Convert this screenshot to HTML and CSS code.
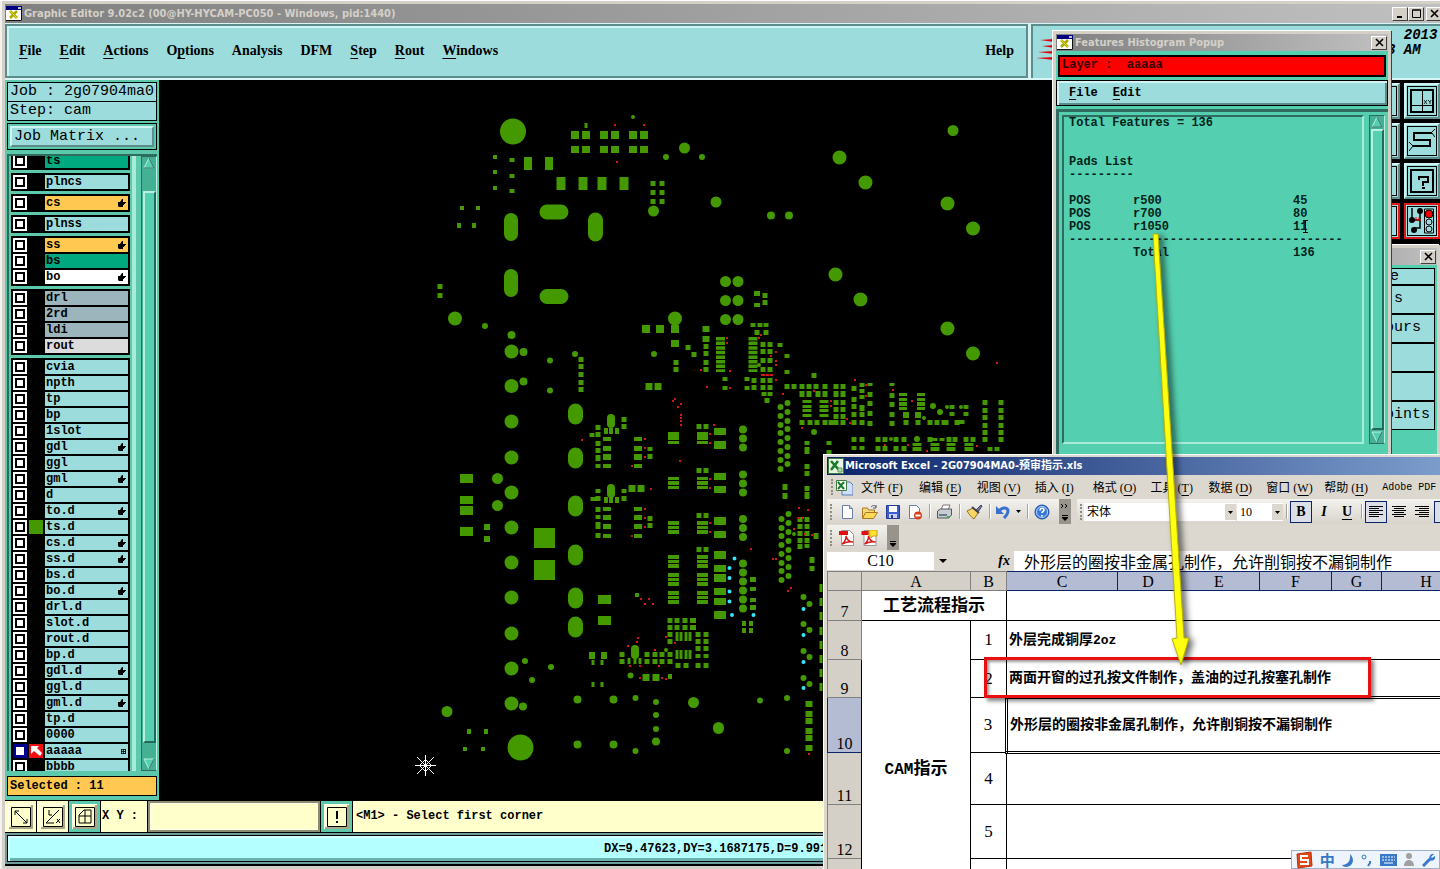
FILE: index.html
```html
<!DOCTYPE html>
<html lang="zh-CN">

<head>
  <meta charset="UTF-8">
  <meta name="viewport" content="width=device-width, initial-scale=1" />
  <title>Graphic Editor 9.02c2</title>
  <link rel="stylesheet" href="styles.css">
</head>

<body>

  <!-- shared icons -->
  <svg width="0" height="0" class="defs">
    <symbol id="i-app" viewBox="0 0 16 15">
      <path fill="#fff" d="M0 0h16v15H0z"/><path fill="#000080" d="M0 0h16v4H0z"/><path fill="#c0c0c0" d="M12 1h3v2h-3z"/>
      <path d="M0 14.500h15.500V4" fill="none" stroke="#111"/>
      <path d="M4 5l7 7M11 5l-7 7" stroke="#a8a800" stroke-width="2.500"/><path d="M4 5l7 7" stroke="#e8e000"/>
    </symbol>
    <symbol id="i-hand" viewBox="0 0 8 8"><path d="M0 3h2l2-3h1v3h3v1H7v1H6v1H5v2H1L0 7z"/></symbol>
    <symbol id="i-xls" viewBox="0 0 16 16">
      <path fill="#e9f5e4" stroke="#3c7d3c" d="M.5.5h15v15H.5z"/><path d="M3 3l8 9M10 3L3 12" stroke="#1b7a2b" stroke-width="2.600"/><path d="M10 10h4v4h-4z" fill="#b9d9a9" stroke="#5a9a5a"/>
    </symbol>
    <symbol id="i-pdf" viewBox="0 0 16 16">
      <path d="M2.500.5h8l4 4v11h-12z" fill="#fff" stroke="#999"/><path d="M0 1h9v4H0z" fill="#e01010"/>
      <path d="M3 14c3-2 4-5 4-8 1 4 3 6 7 6-4-1-7 0-11 2z" fill="none" stroke="#d81818" stroke-width="1.400"/>
    </symbol>
  </svg>

  <div class="editor">
    <header class="title-bar">
      <svg width="16" height="15"><use href="#i-app"/></svg>
      <h1>Graphic Editor 9.02c2 (00@HY-HYCAM-PC050 - Windows, pid:1440)</h1>
      <div class="win-btns">
        <button aria-label="Minimize"><svg width="9" height="9"><path d="M1 8h5" stroke="#000" stroke-width="2"/></svg></button>
        <button aria-label="Maximize"><svg width="9" height="9"><path d="M.5 1h8v7.500h-8zM0 1h9" fill="none" stroke="#000"/></svg></button>
        <button aria-label="Close"><svg width="9" height="9"><path d="M1 1l7 7M8 1l-7 7" stroke="#000" stroke-width="1.600"/></svg></button>
      </div>
    </header>

    <div class="menu-row">
      <nav class="menu-bar">
        <button><u>F</u>ile</button>
        <button><u>E</u>dit</button>
        <button><u>A</u>ctions</button>
        <button>O<u>p</u>tions</button>
        <button>Analysis</button>
        <button>DFM</button>
        <button><u>S</u>tep</button>
        <button><u>R</u>out</button>
        <button><u>W</u>indows</button>
        <button class="help">Help</button>
      </nav>
      <div class="brand">
        <svg width="18" height="24"><path d="M18 1v3L4 2zM18 7v3L6 8zM18 13v3L2 14zM18 19v3L0 20z" fill="#e00010"/></svg>
        <pre>  2013
3 AM</pre>
      </div>
    </div>

    <div class="workspace">
      <aside class="sidebar">
        <div class="job">Job : 2g07904ma0</div>
        <div class="job">Step: cam</div>
        <div class="matrix"><button>Job Matrix ...</button></div>
        <div class="layers">
          <div class="layer-list" id="layers"></div>
          <div class="rail"></div>
          <div class="scroll">
            <svg width="14" height="13"><path d="M7 1L2 11h10z" fill="#54d0b0" stroke="#b8f0e0"/><path d="M7 1l5 10H2" fill="none" stroke="#23685a"/></svg>
            <div class="thumb"></div>
            <svg width="14" height="13"><path d="M2 2h10L7 12z" fill="#54d0b0" stroke="#b8f0e0"/><path d="M12 2L7 12" stroke="#23685a"/></svg>
          </div>
        </div>
        <div class="selected">Selected : 11</div>
      </aside>

      <main class="canvas">
        <svg width="1281" height="720" viewBox="159 80 1281 720">
          <!-- rectangular pads, drawn as columns: stroke width = pad width -->
          <g class="pads">
            <path stroke-width="8" d="M575 131v8M586 131v8M604 131v8M615 131v8M633 131v8M644 131v8M575 146v7M586 146v7M604 146v7M615 146v7M633 146v7M644 146v7M528 157v13M549 157v13M646 325v8M660 325v8M675 325v8M675 340v7
              M607 437v4M607 446v5M607 454v6M607 464v4M638 437v4M638 446v5M638 454v6M638 464v4M607 507v4M607 515v5M607 524v5M607 534v4M638 507v4M638 515v5M638 524v5M638 534v4
              M903 393v3M903 398v3M903 402v4M903 407v3M921 393v3M921 398v3M921 402v4M921 407v3"/>
            <path stroke-width="9" d="M561 177v13M583 177v13M602 177v13M624 177v13M807 400v3M807 405v3M807 409v3M807 414v3M824 400v3M824 405v3M824 409v3M824 414v3M917 443v3M917 447v4M935 443v3M935 447v4M951 443v3M951 447v4M969 443v3M969 447v4"/>
            <path stroke-width="9" stroke-dasharray="3.500 1.100" d="M720.500 337v35M753 337v35"/>
            <path stroke-width="13" d="M466.500 474v9M466.500 496v8M466.500 506v9M466.500 527v9M604.500 595v9M604.500 616v9"/>
            <path stroke-width="21" d="M544.500 528v20M544.500 560v20"/>
            <path stroke-width="12" d="M720 428v7M720 441v8M720 473v7M720 486v7M720 517v8M720 531v7M720 551v8M720 565v7M720 574v8M720 588v7M720 598v7M720 611v8"/>
            <path stroke-width="11" d="M673.500 432v8M673.500 441v3M702.500 432v8M702.500 441v3M673.500 477v3M673.500 481v4M673.500 486v3M702.500 477v3M702.500 481v4M702.500 486v3M673.500 521v4M673.500 526v3M673.500 530v4M702.500 521v4M702.500 526v3M702.500 530v4
              M673.500 555v4M673.500 560v3M673.500 564v4M702.500 555v4M702.500 560v3M702.500 564v4M673.500 573v4M673.500 578v3M673.500 582v4M702.500 573v4M702.500 578v3M702.500 582v4M673.500 591v4M673.500 596v3M673.500 600v4M702.500 591v4M702.500 596v3M702.500 600v4"/>
            <path stroke-width="7" d="M632 485v7M641 485v7M649 383v7M658 383v7M706 326v6M706 336v6M646 674v7M656 674v7M809 701v6M809 711v6M809 718v6M809 728v6M809 735v6M809 745v6M945 420v5"/>
            <path stroke-width="6" d="M487 524v6M487 536v6M592 652v7M604 652v7M753 577v5M753 587v4M753 598v4M753 605v5M757 291v5M757 303v4M906 412v6M918 412v6M693 618v5M693 625v5"/>
            <path stroke-width="5" d="M440 284v5M440 293v5M512 158v4M512 174v4M512 189v4M581 357v5M581 364v5M581 372v5M581 380v5M581 387v5M653 181v5M662 181v5M653 190v5M662 190v5M653 199v5M662 199v5
              M688 345v5M694 352v5M676 360v5M676 367v5M706 344v5M706 351v5M706 360v5M706 367v5M725 377v4M725 386v4M747 377v4M747 386v4M754 378v5M754 385v5M765 293v5M765 300v5
              M753 323v4M760 323v4M766 323v4M757 330v5M766 330v5M763 342v5M770 342v5M763 349v5M770 349v5M763 358v5M770 358v5M763 367v5M770 367v5M763 378v5M770 378v5M763 385v5M770 385v5M764 392v4M770 392v4M767 398v5M780 343v4M787 354v4M787 370v4
              M624 417v5M624 424v5M598 425v5M598 432v5M592 433v4M598 441v5M598 448v5M598 455v6M598 464v4M650 447v4M650 454v5M624 489v4M624 496v5M598 489v4M598 496v5M593 497v4M598 507v5M598 515v4M598 522v7M598 533v5M650 516v5M650 523v5
              M699 424v5M706 424v5M699 468v5M706 468v5M699 513v5M706 513v5M699 547v5M706 547v5
              M787 384v5M794 384v5M802 384v5M809 384v5M816 384v5M825 384v5M836 384v5M843 384v5M814 373v5M802 391v6M809 391v6M818 391v6M825 391v6M836 391v6M843 391v6M836 400v5M843 400v5M836 407v5M843 407v5M836 414v5M843 414v5M802 420v5M810 420v5M817 420v5M825 420v5M831 420v5M836 420v5M843 420v5
              M854 386v5M854 397v5M854 404v5M854 412v5M854 420v5M862 383v4M862 389v4M862 395v4M862 405v6M862 412v5M862 420v5M870 383v3M870 392v5M870 401v5M870 411v5M870 421v5M892 383v3M892 393v5M892 402v5M892 412v5M892 421v5M906 420v5M918 420v5M930 420v5M937 420v5M957 420v5M962 420v4
              M952 405v4M952 412v4M966 405v4M966 412v4M985 400v5M985 408v5M985 415v5M985 423v5M985 430v5M985 437v5M1001 400v5M1001 408v5M1001 415v5M1001 423v5M1001 430v5M1001 437v5
              M854 437v5M862 437v5M878 437v5M885 437v5M896 437v5M904 437v5M930 437v5M935 438v3M942 438v3M949 437v5M955 437v5M966 437v5M973 437v5M854 446v4M862 446v4M878 446v5M885 446v5M896 446v5M904 446v5M990 447v4M997 447v4
              M807 441v4M807 447v7M829 441v4M829 450v4M807 464v5M807 471v5M807 486v5M807 492v7M785 484v6M785 493v6M800 517v5M807 517v5M800 524v5M807 524v5M800 531v5M807 531v5M800 538v5M807 538v5M800 544v5M807 544v4M812 557v6M812 566v5M816 533v6
              M670 618v5M677 618v5M685 618v5M670 625v5M677 625v5M685 625v5M670 632v5M670 639v5M698 632v5M706 632v5M698 639v5M706 639v5M698 646v5M706 646v5M698 654v4M706 654v4M698 663v5M706 663v5M678 663v5M686 663v5
              M622 652v5M622 659v5M647 652v5M655 652v5M662 652v5M670 652v5M647 659v5M655 659v5M662 659v5M670 659v5"/>
            <path stroke-width="4" d="M495 155v4M495 170v4M495 186v4M462 206v4M478 206v4M459 223v5M474 223v5M469 729v5M486 729v5M465 747v4M483 747v4M744 621v5M751 621v5M744 628v5M751 628v5M606 428v6M617 428v6M606 497v6M617 497v6M611 428v6M611 497v6M637 593v4M670 674v5"/>
            <path stroke-width="3" d="M586 123v5M677 632v9M681 632v9M686 632v9M690 632v9M677 650v9M681 650v9M686 650v9M690 650v9M593 660v5M602 660v5M593 682v5M602 682v5M629 658v6M635 658v6M640 658v6M821 584v8M821 598v8M821 612v8M821 627v8M821 641v8M821 655v8M821 669v8M821 683v8"/>
          </g>

          <!-- round and oblong pads -->
          <g class="pads round">
            <path stroke-width="26" d="M513 131.500h0M520.500 747.500h0"/>
            <path stroke-width="15" d="M575.500 411v6M575.500 455v6M575.500 503v6M575.500 552v6M575.500 595v6M575.500 624v6M595.500 220v14M547 212h14M547 296.500h14"/>
            <path stroke-width="14" d="M511 220v14M511 276v14M455 318.500h0M675 318.500h0M511.500 351.500h0M511.500 386h0M511.500 421.500h0M511.500 457.500h0M511.500 492.500h0M511.500 527.500h0M511.500 562.500h0M511.500 597.500h0M511.500 633.500h0M511.500 668.500h0M511.500 703.500h0
              M839.500 157.500h0M865.500 182.500h0M947.500 203.500h0M973 228.500h0M835.500 274.500h0M860.500 299.500h0M947.500 328.500h0M973 353.500h0"/>
            <path stroke-width="11" d="M684.500 148h0M653.500 211h0M716 202h0M725.500 281.500h0M738 281.500h0M725.500 300.500h0M738 300.500h0M725.500 319.500h0M738 319.500h0M497.500 478.500h0M497.500 505.500h0M693.500 702.500h0M718.500 727.500v1M953 130.500h0M447 711.500h0"/>
            <path stroke-width="8" d="M635 649v6M611 418v6M611 488v6M743 429.500h0M743 438.500h0M743 447.500h0M743 474.500h0M743 483.500h0M743 492.500h0M743 519h0M743 528h0M743 537h0M743 563.500h0M743 572.500h0M743 581.500h0M743 590.500h0M743 599.500h0M743 608.500h0
              M577.500 699.500h0M613.500 699.500h0M577.500 744.500h0M613.500 744.500h0M771 215.500h0M789 215.500h0M523.500 352h0M523.500 381.500h0M511.500 335h0M523 706.500h0M656 741.500h0"/>
            <path stroke-width="6" d="M485 326h0M575 354h0M550 360.500h0M550 390.500h0M654 354h0M525 661h0M551 667h0M532 680h0M635.500 698h0M656 702h0M656 715h0M656 729h0M635.500 751h0M760 700.500h0M787 698h0M787 751h0M666 157h0M702 157h0M630.500 675.500h0
              M780.500 407h0M780.500 416h0M780.500 425h0M780.500 433h0M780.500 442h0M780.500 451h0M780.500 460h0M780.500 469h0M787.500 403h0M787.500 412h0M787.500 421h0M787.500 429h0M787.500 438h0M787.500 447h0M787.500 456h0M787.500 464h0
              M781.500 519h0M781.500 528h0M781.500 536h0M781.500 545h0M781.500 554h0M781.500 563h0M781.500 571h0M781.500 580h0M788.500 514h0M788.500 523h0M788.500 532h0M788.500 541h0M788.500 550h0M788.500 558h0M788.500 567h0M788.500 576h0
              M814 432h0M933 406h0M940 412h0M803.500 597h0M803.500 624h0M803.500 651h0M803.500 678h0M809.500 604h0M809.500 630h0M809.500 657h0M809.500 684h0M917 439h0"/>
            <path stroke-width="4" d="M633 117h0M666 650h0M924 418h0M947 407h0M961 407h0M891 439h0M794 534h0M759 365h0"/>
          </g>

          <path class="drill" d="M614 125h2M643 125h2M616 162h2M726 338h2M726 343h2M760 335h2M758 338h2M770 356h2M775 352h2M775 361h2M775 365h2M775 380h2M761 375h4M766 375h3M770 375h3M729 371h2M729 388h2M700 370h2M706 387h2M782 394h2M813 391h2M830 401h2M830 406h2M854 380h2M865 385h2M865 396h2M846 419h2M849 423h2M801 428h2M892 390h2M911 401h2M996 363h2M884 445h2M907 445h2M926 451h2M976 446h2M713 425h2M709 434h2M709 443h2M709 479h2M709 488h2M709 523h2M709 532h2M798 508h2M807 510h2M798 518h2M802 518h2M793 529h2M804 534h2M811 535h2M750 549h2
            M581 440h2M644 439h2M644 448h2M644 457h2M631 466h2M650 489h2M644 509h2M644 518h2M644 527h2M631 536h2M672 401h2M674 399h2M680 404h2M677 407h2M680 415h2M680 418h2M680 421h2M680 425h2M679 461h2M640 599h2M648 599h2M644 604h2M652 604h2
            M637 638h2M636 642h2M627 646h2M665 637h2M674 643h2M654 650h2M629 666h2M639 666h2M658 666h2M639 678h2M661 678h2M665 679h2M772 559h2M775 559h2M787 591h2M790 588h2M808 754h2"/>
          <path class="via" d="M734.500 558.500h0M729.500 568h0M729.500 578h0M729.500 591.500h0M729.500 601.500h0M732 615h0M753.500 615h0M803.500 609h0M803.500 635h0M803.500 662h0M803.500 688h0"/>
          <path class="origin" d="M415 765.500h21M425.500 755v21M417 757l17 17M434 757l-17 17M425.500 759.500l6 6-6 6-6-6z"/>
        </svg>
      </main>

      <aside class="tools">
        <button></button>
        <button aria-label="Coordinates"><svg width="24" height="24"><path d="M1 1h22v22H1z" fill="none" stroke="#000" stroke-width="2"/><path d="M12.500 1v22M1 16.500h22" stroke="#000"/><path d="M14 11l3 4M17 11l-3 4M18 11l2 2 1-2M20 13v2" stroke="#000" fill="none" stroke-width=".8"/></svg></button>
        <button></button>
        <button aria-label="Route"><svg width="26" height="24"><path d="M23 4H5v7h16v6H4" fill="none" stroke="#000" stroke-width="2"/><path d="M22 4l4-4M23 4l3 4M4 17l-4-4M4 17l-4 5" fill="none" stroke="#000"/></svg></button>
        <button></button>
        <button aria-label="Query"><svg width="24" height="24"><path d="M1 1h22v22H1z" fill="none" stroke="#000" stroke-width="2"/><path d="M9 11V8h9v5h-5v4M12 19h3" fill="none" stroke="#000" stroke-width="2"/></svg></button>
        <button class="on"></button>
        <button class="on" aria-label="Net check"><svg width="26" height="26"><path d="M3 0v12M11 3v17H5M3 12h8" stroke="#000" stroke-width="1.500" fill="none"/><path d="M5 12h7M7 9v3M10 9v3" stroke="#e00000"/><circle cx="3" cy="12" r="3"/><circle cx="11" cy="3" r="3"/><circle cx="5" cy="22" r="3"/><path d="M15.500 1h9v24h-9z" fill="none" stroke="#000"/><circle cx="20" cy="6" r="4" fill="#f00000" stroke="#000"/><circle cx="20" cy="14" r="3" fill="none" stroke="#000"/><circle cx="20" cy="21" r="3" fill="none" stroke="#000"/></svg></button>
      </aside>
    </div>

    <div class="command">
      <button class="cmd-btn" aria-label="Zoom area"><svg width="20" height="20"><path d="M.5.5h19v19H.5zM4 4l12 12M4 8V4h4M16 12v4h-4" fill="none" stroke="#000"/></svg></button>
      <button class="cmd-btn" aria-label="Snap angle"><svg width="20" height="20"><path d="M.5.5h19v19H.5zM3 16L16 3M3 16h8M6 3v5h3M14 12l3 4M17 12l-4 4" fill="none" stroke="#000"/></svg></button>
      <button class="cmd-btn active" aria-label="Grid"><svg width="20" height="20"><path d="M.5.5h19v19H.5zM4 16h12V3H9L4 8zM10 3v13M4 9h12" fill="none" stroke="#000"/></svg></button>
      <label for="xy">X Y :</label>
      <input type="text" id="xy">
      <button class="cmd-btn active" aria-label="Info"><svg width="20" height="20"><path d="M.5.5h19v19H.5z" fill="none" stroke="#000"/><path d="M10 4v8M10 14v2" stroke="#000" stroke-width="2"/></svg></button>
      <div class="message">&lt;M1&gt; - Select first corner</div>
    </div>
    <footer class="status"><div>DX=9.47623,DY=3.1687175,D=9.991</div></footer>
  </div>

  <!-- narrow popup behind the histogram -->
  <section class="window side-popup">
    <div class="popup-title"><span></span><button aria-label="Close"><svg width="9" height="9"><path d="M1 1l7 7M8 1l-7 7" stroke="#000" stroke-width="1.600"/></svg></button></div>
    <ul>
      <li class="short">e</li>
      <li>&nbsp;s</li>
      <li>ours</li>
      <li></li>
      <li></li>
      <li>oints</li>
    </ul>
  </section>

  <section class="window histogram">
    <div class="popup-title">
      <svg width="16" height="15"><use href="#i-app"/></svg>
      <span>Features Histogram Popup</span>
      <button aria-label="Close"><svg width="9" height="9"><path d="M1 1l7 7M8 1l-7 7" stroke="#000" stroke-width="1.600"/></svg></button>
    </div>
    <div class="layer-name">Layer :&nbsp; aaaaa</div>
    <nav class="popup-menu"><button><u>F</u>ile</button><button><u>E</u>dit</button></nav>
    <div class="report-area">
      <div class="report">
        <p>Total Features = 136</p>
        <p class="pads-title">Pads List<br>---------</p>
        <table>
          <tr><td>POS</td><td>r500</td><td>45</td></tr>
          <tr><td>POS</td><td>r700</td><td>80</td></tr>
          <tr><td>POS</td><td>r1050</td><td>11<svg class="caret" width="5" height="13"><path d="M0 .5h5M2.500 0v13M0 12.500h5" stroke="#000"/></svg></td></tr>
          <tr><td colspan="3">--------------------------------------</td></tr>
          <tr><td></td><td>Total</td><td>136</td></tr>
        </table>
      </div>
      <div class="scroll">
        <svg width="14" height="13"><path d="M7 1L2 11h10z" fill="#54d0b0" stroke="#b8f0e0"/><path d="M7 1l5 10H2" fill="none" stroke="#23685a"/></svg>
        <div class="thumb"></div>
        <svg width="14" height="13"><path d="M2 2h10L7 12z" fill="#54d0b0" stroke="#b8f0e0"/><path d="M12 2L7 12" stroke="#23685a"/></svg>
      </div>
    </div>
  </section>

  <section class="excel">
    <header class="excel-title"><svg width="16" height="16"><use href="#i-xls"/></svg><span>Microsoft Excel - 2G07904MA0-预审指示.xls</span></header>
    <nav class="excel-menu">
      <i class="grip"></i>
      <svg width="17" height="17"><path d="M6 3h8l3 3v10H6z" fill="#cfe0f8" stroke="#5a7ab0"/><path fill="#fff" stroke="#3c7d3c" d="M.5 1.500h10v10H.5z"/><path d="M2 3l6 7M8 3L2 10" stroke="#1b7a2b" stroke-width="2"/></svg>
      <button>文件 (<u>F</u>)</button>
      <button>编辑 (<u>E</u>)</button>
      <button>视图 (<u>V</u>)</button>
      <button>插入 (<u>I</u>)</button>
      <button>格式 (<u>O</u>)</button>
      <button>工具 (<u>T</u>)</button>
      <button>数据 (<u>D</u>)</button>
      <button>窗口 (<u>W</u>)</button>
      <button>帮助 (<u>H</u>)</button>
      <button class="adobe">Adobe PDF</button>
    </nav>
    <div class="tool-row">
      <div class="tool-bar">
        <i class="grip"></i>
        <button aria-label="New"><svg width="16" height="16"><path d="M3.500 1.500h7l3 3v10h-10z" fill="#fff" stroke="#6a7fa8"/><path d="M10.500 1.500v3h3" fill="#c8d8f0" stroke="#6a7fa8"/></svg></button>
        <button aria-label="Open"><svg width="18" height="16"><path d="M1.500 14V4h5l1 2h6v3" fill="#f8d878" stroke="#a87820"/><path d="M1.500 14.500l3-6h12l-4 6z" fill="#ffd858" stroke="#a87820"/><path d="M10 3c2-2 4-2 5 0m0-2v3h-3" fill="none" stroke="#556"/></svg></button>
        <button aria-label="Save"><svg width="16" height="16"><path d="M1.500 1.500h13v13h-13z" fill="#3c5cd0" stroke="#23389a"/><path d="M4 2h8v6H4z" fill="#fff"/><path d="M4 10h8v4H4z" fill="#c8d0e8"/><path d="M6 11h2v3H6z" fill="#23389a"/></svg></button>
        <button aria-label="Permission"><svg width="16" height="16"><path d="M2.500 1.500h7l3 3v10h-10z" fill="#fff" stroke="#6a7fa8"/><circle cx="11" cy="11.500" r="4" fill="#d84020"/><path d="M8.500 11.500h5" stroke="#fff" stroke-width="2"/></svg></button>
        <i class="sep"></i>
        <button aria-label="Print"><svg width="17" height="16"><path d="M5 6l2-5h7l-2 5z" fill="#fff" stroke="#777"/><path d="M1.500 7l3-2h11v6l-3 3h-11z" fill="#c8ccd4" stroke="#555"/><path d="M3 10h8v2H3z" fill="#6a7a88"/><path d="M11 12h3v2h-3z" fill="#30b830"/></svg></button>
        <i class="sep"></i>
        <button aria-label="Format painter"><svg width="17" height="16"><path d="M10 6l5-5 1 1-4 6z" fill="#6878c0" stroke="#445"/><path d="M1 7l6-3 5 5-4 6C5 13 3 10 1 7z" fill="#f8d860" stroke="#8a7020"/><path d="M6 3l7 6" stroke="#445" stroke-width="2"/></svg></button>
        <i class="sep"></i>
        <button aria-label="Undo"><svg width="14" height="14"><path d="M3 6c4-5 9-3 9 0s-2 5-4 7" fill="none" stroke="#3870d0" stroke-width="3"/><path d="M0 1v8h8z" fill="#3870d0"/></svg></button>
        <svg class="drop" width="5" height="3"><path d="M0 0h5L2.500 3z"/></svg>
        <i class="sep"></i>
        <button aria-label="Help"><svg width="16" height="16"><circle cx="8" cy="8" r="7" fill="#3878d8" stroke="#1c4ca0"/><circle cx="8" cy="8" r="5.500" fill="none" stroke="#b8d8ff"/><path d="M6 6.500c0-3 4-3 4-.5 0 1.500-2 1.500-2 3M8 11v1.500" fill="none" stroke="#fff" stroke-width="1.600"/></svg></button>
        <div class="bar-end"><svg width="7" height="18"><path d="M0 1l2 2-2 2M4 1l2 2-2 2M1 12.500h6M1 14.500h6" stroke="#000" fill="none"/><path d="M1 15h6l-3 3z"/></svg></div>
      </div>
      <div class="tool-bar format">
        <i class="grip"></i>
        <select class="font-name" aria-label="Font"><option>宋体</option></select>
        <select class="font-size" aria-label="Font size"><option>10</option></select>
        <i class="sep"></i>
        <button class="pressed"><b>B</b></button>
        <button><b><em>I</em></b></button>
        <button><b><u>U</u></b></button>
        <i class="sep"></i>
        <button class="pressed" aria-label="Align left"><svg width="14" height="12"><path d="M0 .5h14M0 2.500h10M0 4.500h14M0 6.500h10M0 8.500h14M0 10.500h10" stroke="#000"/></svg></button>
        <button aria-label="Center"><svg width="14" height="12"><path d="M0 .5h14M2 2.500h10M0 4.500h14M2 6.500h10M0 8.500h14M2 10.500h10" stroke="#000"/></svg></button>
        <button aria-label="Align right"><svg width="14" height="12"><path d="M0 .5h14M4 2.500h10M0 4.500h14M4 6.500h10M0 8.500h14M4 10.500h10" stroke="#000"/></svg></button>
        <button class="pressed" aria-label="Merge"></button>
      </div>
    </div>
    <div class="tool-row">
      <div class="tool-bar">
        <i class="grip"></i>
        <button aria-label="Convert to PDF"><svg width="16" height="16"><use href="#i-pdf"/></svg></button>
        <button aria-label="Convert and mail"><svg width="17" height="16"><use href="#i-pdf"/><path d="M8 0h8v6h-4l-2 2V6H8z" fill="#ffe030" stroke="#c8a010"/></svg></button>
        <div class="bar-end"><svg width="7" height="18"><path d="M1 12.500h6M1 14.500h6" stroke="#000" fill="none"/><path d="M1 15h6l-3 3z"/></svg></div>
      </div>
    </div>
    <div class="formula-row">
      <input type="text" class="name-box" aria-label="Name box" value="C10">
      <svg class="drop" width="8" height="4"><path d="M0 0h8L4 4z"/></svg>
      <em>fx</em>
      <input type="text" class="formula" aria-label="Formula" value="外形层的圈按非金属孔制作，允许削铜按不漏铜制作">
    </div>
    <table class="sheet">
      <colgroup><col class="c0"><col class="ca"><col class="cb"><col class="cc"><col class="cd"><col class="ce"><col class="cf"><col class="cg"><col class="ch"></colgroup>
      <tr class="cols"><th></th><th>A</th><th>B</th><th class="sel">C</th><th class="sel">D</th><th class="sel">E</th><th class="sel">F</th><th class="sel">G</th><th class="sel">H</th></tr>
      <tr class="r7"><th>7</th><td colspan="2" class="group">工艺流程指示</td><td colspan="6"></td></tr>
      <tr class="r8"><th>8</th><td rowspan="6" class="group"><span class="latin">CAM</span>指示</td><td class="num">1</td><td colspan="6">外层完成铜厚<span class="latin-sm">2oz</span></td></tr>
      <tr class="r9"><th>9</th><td class="num">2</td><td colspan="6">两面开窗的过孔按文件制作，盖油的过孔按塞孔制作</td></tr>
      <tr class="r10"><th class="sel">10</th><td class="num">3</td><td colspan="6" class="current">外形层的圈按非金属孔制作，允许削铜按不漏铜制作</td></tr>
      <tr class="r11"><th>11</th><td class="num">4</td><td colspan="6"></td></tr>
      <tr class="r12"><th>12</th><td class="num">5</td><td colspan="6"></td></tr>
      <tr class="r13"><th></th><td class="num"></td><td colspan="6"></td></tr>
    </table>
  </section>

  <!-- markup on top of the windows -->
  <div class="mark-box"></div>
  <svg class="mark-arrow" width="60" height="450">
    <path d="M11 4L16 4 42 408 47 408 39 435 30 409 35 408z" fill="#ffff10" stroke="#b8b000" stroke-width="1"/>
  </svg>

  <div class="ime">
    <svg width="18" height="18"><path d="M2 3l14-2 1 14-14 2z" fill="#e04818" stroke="#b83008"/><path d="M13 5H6v4h7v4H5" fill="none" stroke="#fff" stroke-width="2"/></svg>
    <span>中</span>
    <svg width="14" height="14"><path d="M9 1c6 6 2 13-4 13-2 0-3-1-4-2 6 0 9-5 8-11z" fill="#3878c8"/></svg>
    <svg width="12" height="14"><circle cx="3" cy="4" r="2" fill="none" stroke="#3878c8"/><path d="M9 8v2l-2 3" fill="none" stroke="#3878c8" stroke-width="2"/></svg>
    <svg width="17" height="12"><path d="M0 0h17v12H0z" fill="#3878c8"/><path d="M2 3h13M2 6h13" stroke="#fff" stroke-dasharray="2 1"/><path d="M4 9h9" stroke="#fff"/></svg>
    <svg width="12" height="14"><circle cx="6" cy="3" r="3" fill="#a0a0a0"/><path d="M1 13c0-8 10-8 10 0z" fill="#a0a0a0"/></svg>
    <svg width="14" height="14"><path d="M1 13l7-7" stroke="#3878c8" stroke-width="3"/><path d="M12 1L9 4l1 1 3-2c1 3-2 6-5 4-2-3 1-7 4-6z" fill="#3878c8"/></svg>
  </div>

  <script>
    // [name, colour class, mark]
    const groups = [
      [['ts', 'green']],
      [['plncs']],
      [['cs', 'orange', 'hand']],
      [['plnss']],
      [['ss', 'orange', 'hand'], ['bs', 'green'], ['bo', 'white', 'hand']],
      [['drl', 'grey'], ['2rd', 'grey'], ['ldi', 'grey'], ['rout', 'silver']],
      [['cvia'], ['npth'], ['tp'], ['bp'], ['1slot'], ['gdl', '', 'hand'], ['ggl'], ['gml', '', 'hand'], ['d'],
       ['to.d', '', 'hand'], ['ts.d', 'shown'], ['cs.d', '', 'hand'], ['ss.d', '', 'hand'], ['bs.d'], ['bo.d', '', 'hand'],
       ['drl.d'], ['slot.d'], ['rout.d'], ['bp.d'], ['gdl.d', '', 'hand'], ['ggl.d'], ['gml.d', '', 'hand'], ['tp.d'],
       ['0000'], ['aaaaa', 'work', 'grid'], ['bbbb']]
    ];
    const marks = {
      hand: '<svg width="8" height="8"><use href="#i-hand"/></svg>',
      grid: '<svg width="5" height="5"><path d="M0 .5h5M0 2.500h5M0 4.500h5M.5 0v5M2.500 0v5M4.500 0v5" stroke="#000" stroke-width=".8"/></svg>'
    };
    const arrow = '<svg width="14" height="14"><path d="M2 2h8L8 4l5 5-2 3-6-5-3 3z" fill="#fff"/></svg>';

    document.getElementById('layers').innerHTML = groups.map(g => '<div class="group">' + g.map(([name, cls = '', mark]) => `
      <div class="layer ${cls}">
        <input type="checkbox" id="l-${name}">
        <span class="chip">${cls === 'work' ? arrow : ''}</span>
        <label for="l-${name}">${name}${mark ? marks[mark] : ''}</label>
      </div>`).join('') + '</div>').join('');
  </script>

</body>

</html>
```
FILE: styles.css
```css
* {
  box-sizing: border-box;
}

body {
  margin: 0;
  height: 100vh;
  overflow: hidden;
  position: relative;
  background: #d4d0c8;
  color: #000;
  font-family: "Liberation Mono", monospace;
  font-weight: bold;
  font-size: 12px;
}

button, input, select {
  font: inherit;
  color: inherit;
  margin: 0;
  padding: 0;
  border: 0;
  border-radius: 0;
  background: none;
}

svg {
  display: block;
  flex: none;
}

u {
  text-underline-offset: 3px;
}

.defs {
  position: absolute;
}

/* ---------- main editor window ---------- */

.editor {
  height: 100vh;
  display: flex;
  flex-direction: column;
  padding: 3px 0 3px 5px;
  border-top: 1px solid #fff;
  box-shadow: inset 2px 0 #f4f2ee;
}

.title-bar {
  display: flex;
  align-items: center;
  gap: 2px;
  height: 19px;
  padding-left: 1px;
  background: linear-gradient(to right, #808080, #c0c0c0);
  flex: none;
}

.title-bar h1, .popup-title span {
  flex: 1;
  margin: 0;
  font: bold 11px "DejaVu Sans Condensed", "DejaVu Sans", sans-serif;
  line-height: 16px;
  color: #d4d0c8;
  white-space: nowrap;
}

.win-btns {
  display: flex;
  margin-right: -2px;
}

.win-btns button, .popup-title button {
  width: 16px;
  height: 14px;
  display: grid;
  place-items: center;
  background: #d4d0c8;
  border: 1px solid;
  border-color: #fff #404040 #404040 #fff;
}

.win-btns button:last-child {
  margin-left: 2px;
}

.menu-row {
  display: flex;
  gap: 3px;
  height: 57px;
  flex: none;
  padding: 1px 0 2px;
  background: #d8f4f4;
}

.menu-bar {
  flex: 1;
  display: flex;
  align-items: center;
  gap: 18px;
  padding: 0 12px;
  background: #9cdcdc;
  border: 2px solid #5c8c8c;
  box-shadow: inset 2px 2px #d0f4f4;
}

.menu-bar button {
  font: bold 14px "Liberation Serif", serif;
}

.menu-bar .help {
  margin-left: auto;
}

.brand {
  width: 409px;
  display: flex;
  justify-content: space-between;
  padding: 2px 0 0 3px;
  background: #9cdcdc;
  border: 2px solid #5c8c8c;
  border-right: 0;
  border-bottom: 0;
}

.brand svg {
  margin-top: 10px;
}

.brand pre {
  margin: 0;
  width: 53px;
  font: italic bold 14px "Liberation Mono", monospace;
  line-height: 15px;
}

.workspace {
  flex: 1;
  min-height: 0;
  display: flex;
  background: #000;
  overflow: hidden;
}

/* ---------- layer panel ---------- */

.sidebar {
  width: 154px;
  flex: none;
  display: flex;
  flex-direction: column;
  padding: 2px 2px 4px;
  background: #5cc8ac;
}

.job {
  height: 20px;
  padding-left: 2px;
  margin-bottom: -1px;
  line-height: 17px;
  font-size: 15px;
  font-weight: normal;
  background: #9cdcdc;
  border: 1px solid #000;
  white-space: nowrap;
}

.matrix {
  margin: 3px 0 4px;
  border: 1px solid #000;
  padding: 2px;
}

.matrix button {
  width: 100%;
  height: 21px;
  padding-left: 2px;
  text-align: left;
  font-size: 15px;
  font-weight: normal;
  background: #9cdcdc;
  border: 2px solid;
  border-color: #d0f4f4 #5c8c8c #5c8c8c #d0f4f4;
}

.layers {
  flex: 1;
  min-height: 0;
  display: flex;
  border-top: 2px solid #2f6b5e;
  border-left: 2px solid #2f6b5e;
  overflow: hidden;
}

.layer-list {
  width: 121px;
  margin-top: -4px;
  padding-left: 2px;
}

.layer-list .group {
  background: #000;
  padding: 1px;
  margin-bottom: 3px;
}

.layer {
  display: flex;
  align-items: center;
  height: 16px;
}

.layer input {
  appearance: none;
  width: 14px;
  height: 14px;
  margin: 0 2px 0 1px;
  background: #fff;
  border: 2px solid #fff;
  box-shadow: inset 0 0 0 2px #000;
}

.chip {
  width: 14px;
  height: 14px;
  margin-right: 2px;
}

.layer label {
  flex: 1;
  display: flex;
  align-items: center;
  justify-content: space-between;
  height: 14px;
  line-height: 14px;
  padding: 0 2px 0 1px;
  margin-right: 1px;
  background: #9cdcdc;
}

.green label { background: #00a880; }
.orange label { background: #ffc850; }
.white label { background: #fff; }
.grey label { background: #9cb4bc; }
.silver label { background: #dcdcdc; }
.shown .chip { background: #449800; }
.work .chip { background: #f01010; }

.work input {
  border-color: #000090;
  box-shadow: inset 0 0 0 1px #000090;
}

.rail {
  flex: 1;
  margin: 0 1px 0 2px;
  border: solid;
  border-width: 0 2px;
  border-color: #a8ecd8;
}

.scroll {
  width: 16px;
  display: flex;
  flex-direction: column;
  background: #44b094;
  border: 1px solid #2f6b5e;
  border-right-color: #b8f0e0;
}

.sidebar .scroll {
  margin-left: 4px;
}

.scroll .thumb {
  flex: 1;
  margin-left: 1px;
  background: #54d0b0;
  border: 2px solid;
  border-color: #b8f0e0 #23685a #23685a #b8f0e0;
}

.sidebar .thumb {
  margin: 21px 0 14px 1px;
}

.selected {
  height: 20px;
  margin-top: 5px;
  padding-left: 2px;
  line-height: 18px;
  background: #ffc850;
  border: 1px solid #000;
}

/* ---------- board ---------- */

.canvas {
  flex: 1;
  min-width: 0;
  overflow: hidden;
}

.pads {
  fill: none;
  stroke: #449800;
}

.round {
  stroke-linecap: round;
}

.drill {
  stroke: #d01818;
  stroke-width: 2;
}

.via {
  stroke: #30e8f8;
  stroke-width: 4;
  stroke-linecap: round;
}

.origin {
  fill: none;
  stroke: #fff;
}

.tools {
  width: 76px;
  display: grid;
  grid-template-columns: 36px 36px;
  grid-auto-rows: 36px;
  gap: 4px;
  padding-top: 3px;
}

.tools button {
  display: grid;
  place-items: center;
  background: #9cdcdc;
  border: 2px solid;
  border-color: #d0f4f4 #5c8c8c #5c8c8c #d0f4f4;
  outline: 1px solid #000;
  outline-offset: -4px;
}

.tools .on {
  border-color: #e01818;
}

/* ---------- command line and status ---------- */

.command {
  display: flex;
  gap: 1px;
  height: 33px;
  padding-top: 1px;
  flex: none;
  background: #000;
}

.cmd-btn {
  width: 31px;
  height: 31px;
  display: grid;
  place-items: center;
  background: #ffffcc;
  border: 3px solid #ffffcc;
  box-shadow: inset 1px 1px #ffffee, inset -2px -2px #a8a888;
}

.cmd-btn.active {
  border-color: #5cc8ac;
}

.command label {
  width: 46px;
  height: 31px;
  line-height: 31px;
  padding-left: 1px;
  background: #ffffcc;
}

.command input {
  width: 172px;
  height: 31px;
  padding: 0 4px;
  background: #ffffcc;
  border: 2px solid #8c8c70;
  outline: 1px solid #ffffee;
  outline-offset: -3px;
}

.message {
  flex: 1;
  height: 31px;
  line-height: 31px;
  padding-left: 3px;
  background: #ffffcc;
}

.status {
  height: 33px;
  flex: none;
  padding: 2px;
  background: #6c9c9c;
  border-bottom: 2px solid #000;
}

.status div {
  height: 27px;
  padding-left: 596px;
  line-height: 26px;
  background: #b4ffff;
  border: 1px solid #000;
  box-shadow: inset 2px 2px #d8ffff, inset 0 -3px #6cb0b0;
}

/* ---------- popups ---------- */

.window {
  position: absolute;
  display: flex;
  flex-direction: column;
  background: #54d0b0;
  border: 3px solid #d4d0c8;
  box-shadow: -1px -1px #fff, 1px 0 #404040;
}

.popup-title {
  display: flex;
  align-items: center;
  gap: 2px;
  height: 17px;
  padding: 0 1px;
  flex: none;
  background: linear-gradient(to right, #808080, #c0c0c0);
}

.histogram {
  top: 31px;
  right: 49px;
  width: 338px;
  height: 440px;
}

.layer-name {
  height: 22px;
  margin: 4px 2px 0;
  padding-left: 2px;
  line-height: 17px;
  background: #ff0000;
  border: 2px solid #000;
  color: #300;
}

.popup-menu {
  display: flex;
  gap: 15px;
  height: 26px;
  margin-top: 3px;
  padding-left: 12px;
  background: #9cdcdc;
  border: 1px solid #000;
  box-shadow: inset 2px 2px #d0f4f4, inset -2px -2px #5c8c8c;
}

.report-area {
  flex: 1;
  display: flex;
  gap: 5px;
  margin-top: 3px;
  padding: 3px 3px 24px;
  border: solid #2f6b5e;
  border-width: 3px 0 0 3px;
}

.report {
  flex: 1;
  padding-left: 5px;
  line-height: 13px;
  border: 2px solid;
  border-color: #2f6b5e #a8ecd8 #a8ecd8 #2f6b5e;
  color: #03231a;
}

.report p {
  margin: 0;
}

.report .pads-title {
  margin: 26px 0 13px;
}

.report table {
  width: 280px;
  table-layout: fixed;
  border-collapse: collapse;
}

.report td {
  height: 13px;
  padding: 0;
  white-space: nowrap;
}

.report td:nth-child(1) { width: 64px; }
.report td:nth-child(2) { width: 160px; }

.caret {
  display: inline-block;
  margin: -2px 0 -3px -4px;
}

.side-popup {
  top: 245px;
  right: 0;
  width: 200px;
  height: 240px;
}

.side-popup ul {
  list-style: none;
  margin: 3px 2px 0 0;
  padding: 0;
  font-weight: normal;
  font-size: 15px;
}

.side-popup li {
  height: 29px;
  padding-left: 141px;
  line-height: 26px;
  text-align: left;
  background: #9cdcdc;
  border: 1px solid #000;
}

.side-popup .short {
  height: 17px;
  padding-left: 146px;
  line-height: 15px;
}

/* ---------- excel ---------- */

.excel {
  position: absolute;
  top: 454px;
  left: 823px;
  right: 0;
  bottom: 0;
  display: flex;
  flex-direction: column;
  overflow: hidden;
  padding: 2px 0 0 3px;
  border: solid #fff;
  border-width: 1px 0 0 1px;
  background: #dcd8d0;
  font-family: "Liberation Serif", "Noto Sans CJK SC", sans-serif;
  font-weight: normal;
  font-size: 12px;
}

.excel-title {
  display: flex;
  align-items: center;
  gap: 1px;
  height: 18px;
  padding-left: 1px;
  flex: none;
  background: linear-gradient(to right, #0a246a, #7c9ccc);
  color: #fff;
  font: bold 11px "DejaVu Sans Condensed", "Noto Sans CJK SC", sans-serif;
  line-height: 18px;
}

.excel-menu {
  display: flex;
  align-items: center;
  height: 24px;
  flex: none;
  padding-left: 4px;
}

.excel-menu button {
  width: 58px;
  text-align: left;
  white-space: nowrap;
}

.excel-menu svg {
  margin: 0 8px 0 2px;
}

.excel-menu .adobe {
  font-family: "Liberation Mono", monospace;
  font-size: 10px;
}

.grip {
  width: 3px;
  height: 16px;
  flex: none;
  border-left: 2px dotted #908c84;
}

.tool-row {
  display: flex;
  gap: 6px;
  height: 26px;
  flex: none;
}

.tool-bar {
  display: flex;
  align-items: center;
  gap: 6px;
  height: 25px;
  padding-left: 3px;
  background: linear-gradient(#f4f2ee, #d8d4cc);
}

.tool-bar button {
  display: grid;
  place-items: center;
}

.sep {
  width: 1px;
  height: 15px;
  background: #a8a49c;
  box-shadow: 1px 0 #fff;
}

.bar-end {
  width: 12px;
  height: 25px;
  margin-left: 3px;
  padding: 4px 2px;
  background: #98948c;
}

.format {
  flex: 1;
  gap: 1px;
}

.format button {
  width: 22px;
  height: 22px;
  flex: none;
  font-size: 14px;
}

.format .pressed {
  background: #dcdfe8;
  border: 1px solid #0a246a;
}

.format .sep {
  margin: 0 2px;
}

.font-name, .font-size {
  height: 18px;
  padding-left: 3px;
  appearance: none;
  flex: none;
  background: url("data:image/svg+xml,%3Csvg xmlns='http://www.w3.org/2000/svg' width='11' height='16'%3E%3Cpath fill='%23dcd8d0' d='M0 0h11v16H0z'/%3E%3Cpath d='M3 7h5L5.500 10z'/%3E%3C/svg%3E") right / 11px 16px no-repeat #fff;
}

.font-name {
  width: 152px;
}

.font-size {
  width: 46px;
}

.formula-row {
  display: flex;
  align-items: center;
  height: 20px;
  flex: none;
  font-size: 16px;
}

.name-box {
  width: 107px;
  height: 18px;
  text-align: center;
  background: #fff;
}

.formula-row .drop {
  margin: 0 auto 0 5px;
}

.formula-row em {
  margin-right: 4px;
  font-weight: bold;
  font-size: 14px;
}

.formula {
  width: calc(100% - 187px);
  height: 20px;
  padding-left: 10px;
  background: #fff;
}

.sheet {
  width: 643px;
  table-layout: fixed;
  border-collapse: collapse;
  background: #fff;
  font-weight: bold;
  font-size: 14px;
}

.c0 { width: 34px; }
.ca { width: 109px; }
.cb { width: 36px; }
.cc { width: 111px; }
.cd { width: 61px; }
.ce { width: 81px; }
.cf { width: 72px; }
.cg { width: 50px; }
.ch { width: 89px; }

.sheet th {
  padding: 0;
  vertical-align: bottom;
  line-height: 16px;
  font-weight: normal;
  font-size: 16px;
  background: #d4d0c8;
  border: 1px solid #808080;
}

.sheet .sel {
  background: #b4bcd4;
  border-color: #0a246a;
}

.sheet td {
  padding: 0 2px;
  line-height: 20px;
  white-space: nowrap;
  border: 1px solid #000;
}

.sheet td.group {
  text-align: center;
  font-size: 17px;
}

.sheet td.num {
  text-align: center;
  font-weight: normal;
  font-size: 17px;
}

.sheet td.current {
  border: 3px double #000;
}

.latin, .latin-sm {
  font-family: "Liberation Mono", monospace;
  font-size: 16px;
}

.latin-sm {
  font-size: 13px;
}

.cols { height: 19px; }
.r7 { height: 30px; }
.r8 { height: 39px; }
.r9 { height: 38px; }
.r10 { height: 55px; }
.r11 { height: 52px; }
.r12 { height: 54px; }
.r13 { height: 60px; }

/* ---------- markup and input bar ---------- */

.mark-box {
  position: absolute;
  left: 984px;
  top: 657px;
  width: 387px;
  height: 41px;
  border: 3px solid #e81010;
  box-shadow: 3px 3px 4px rgba(0, 0, 0, 0.5), inset 2px 2px 3px rgba(0, 0, 0, 0.4);
}

.mark-arrow {
  position: absolute;
  left: 1142px;
  top: 230px;
  filter: drop-shadow(4px 2px 3px rgba(0, 0, 0, 0.6));
}

.ime {
  position: absolute;
  right: 0;
  bottom: 0;
  width: 149px;
  height: 19px;
  display: flex;
  align-items: center;
  justify-content: space-around;
  background: #eef4fc;
  border: 1px solid #a0b0c8;
  color: #3878c8;
  font: bold 15px "Noto Sans CJK SC", sans-serif;
  line-height: 16px;
}
```
